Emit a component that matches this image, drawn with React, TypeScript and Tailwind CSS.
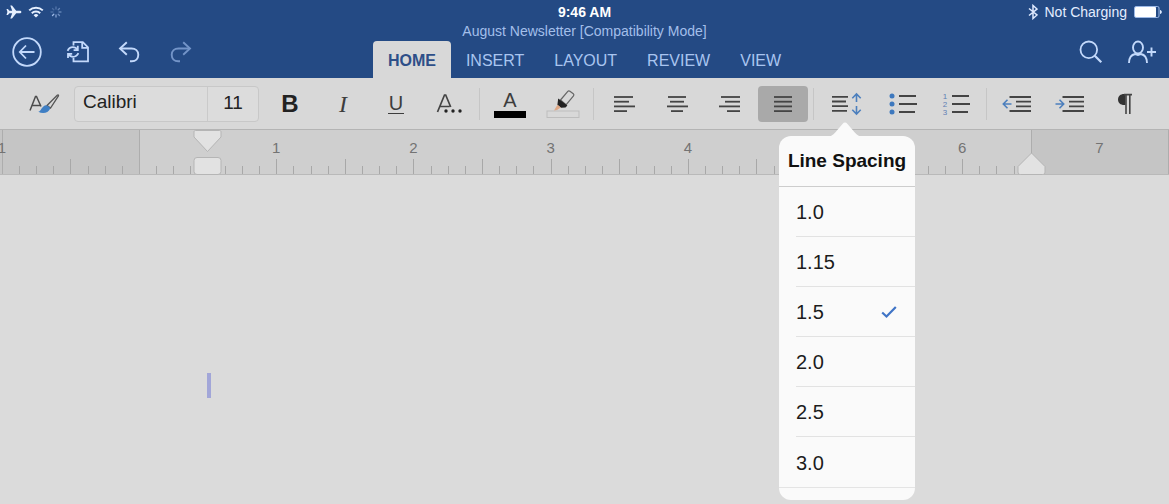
import React, { useState } from "react";

type IconProps = { className?: string };

const Plane = () => (
  <svg width="16" height="14" viewBox="0 0 16 14" fill="#e6f0ff" aria-hidden="true">
    <path d="M15.4 7c0-.8-.8-1.300-1.800-1.300H10.200L6 .6H4.300l1.900 5.100H3.400L1.900 3.900H.5L1.400 7l-.9 3.100h1.400l1.500-1.800h2.800l-1.900 5.100H6l4.200-5.100h3.400c1 0 1.800-.5 1.800-1.300z" />
  </svg>
);

const Wifi = () => (
  <svg width="16" height="12" viewBox="0 0 16 12" fill="none" stroke="#e6f0ff" strokeWidth="2" aria-hidden="true">
    <path d="M1.2 4.4a9.8 9.8 0 0 1 13.6 0" />
    <path d="M3.8 7.2a6 6 0 0 1 8.4 0" />
    <path d="M8 11.6L5.6 9.2a3.4 3.4 0 0 1 4.8 0z" fill="#e6f0ff" stroke="none" />
  </svg>
);

const Spinner = () => (
  <svg width="12" height="12" viewBox="0 0 12 12" fill="none" stroke="#9db9e6" strokeWidth="1.3" strokeLinecap="round" aria-hidden="true">
    <path d="M6 1v2" opacity=".4" />
    <path d="M9.5 2.5L8.2 3.8" opacity=".5" />
    <path d="M11 6H9" opacity=".5" />
    <path d="M9.5 9.5L8.2 8.2" opacity=".6" />
    <path d="M6 11V9" opacity=".8" />
    <path d="M2.5 9.5l1.3-1.3" />
    <path d="M1 6h2" opacity=".3" />
    <path d="M2.5 2.5l1.3 1.3" opacity=".3" />
  </svg>
);

const Bluetooth = () => (
  <svg width="10" height="16" viewBox="0 0 10 16" fill="none" stroke="#dfeaff" strokeWidth="1.5" aria-hidden="true">
    <path d="M1 4.500l8 6.500-4 3.500V1.500L9 5l-8 6.500" />
  </svg>
);

const Battery = () => (
  <svg width="28" height="12" viewBox="0 0 28 12" aria-hidden="true">
    <rect x=".5" y=".5" width="24.5" height="11" rx="1.5" fill="none" stroke="#9db9e6" />
    <rect x="1" y="1" width="21" height="10" rx=".8" fill="#fff" />
    <path d="M26 4c1.2.2 1.8 1 1.8 2S27.200 7.800 26 8z" fill="#dfeaff" />
  </svg>
);

const Back = () => (
  <svg width="30" height="30" viewBox="0 0 30 30" fill="none" stroke="#c3d9fb" strokeWidth="1.800" aria-hidden="true">
    <circle cx="15" cy="15" r="13.8" />
    <path d="M22.500 15H8.500M14 8.500L7.800 15l6.200 6.500" />
  </svg>
);

const SyncFile = () => (
  <svg width="24" height="22" viewBox="0 0 24 22" fill="none" stroke="#c3d9fb" strokeWidth="1.800" aria-hidden="true">
    <path d="M7.500 4.500V1.200h9.300l5.200 5.200v13.900H7.500V17" />
    <path d="M16.200 1.200v5.600H22" />
    <path d="M1.600 9.800C2.600 7.600 4.500 6.200 6.800 6.200c2.100 0 3.600.9 4.600 2.600M11.800 4.800v4.300H7.600" />
    <path d="M12.400 12.200c-1 2.200-2.900 3.600-5.200 3.600-2.100 0-3.600-.9-4.600-2.600M2 17v-4.100h4.200" />
  </svg>
);

const Undo = ({ className }: IconProps) => (
  <svg className={className} width="22" height="22" viewBox="0 0 22 22" fill="none" stroke="currentColor" strokeWidth="1.900" aria-hidden="true">
    <path d="M8.800 1.200L2 7.500l6.800 6.300" />
    <path d="M2 7.500h11.500c4 0 6.800 2.500 6.800 6.300s-2.700 6.500-6.500 6.500H12" />
  </svg>
);

const Search = () => (
  <svg width="24" height="24" viewBox="0 0 24 24" fill="none" stroke="#c3d9fb" strokeWidth="1.800" aria-hidden="true">
    <circle cx="9.800" cy="9.800" r="8.300" />
    <path d="M15.800 15.800l6.500 6.500" strokeWidth="2.200" />
  </svg>
);

const AddUser = () => (
  <svg width="30" height="24" viewBox="0 0 30 24" fill="none" stroke="#c3d9fb" strokeWidth="1.900" aria-hidden="true">
    <ellipse cx="11" cy="7.500" rx="5" ry="6" />
    <path d="M2 23c0-5.500 2-8.200 6.200-9 1.800 1.200 3.800 1.200 5.600 0 4.200.8 6.200 3.500 6.200 9" />
    <path d="M24.500 7.500v9M20 12h9" />
  </svg>
);

const Brush = () => (
  <svg width="31" height="22" viewBox="0 0 31 22" fill="none" aria-hidden="true">
    <path d="M1 17.500L6.500 3.500h1l4.500 10M3 12.500h8" stroke="#4c4c4c" strokeWidth="1.500" />
    <path d="M18 12.500L28.200 2.200c1-.8 1.700 0 1.100 1L21.500 15z" stroke="#555" strokeWidth="1.300" />
    <path d="M9.300 18.800c2.700-.4 3.200-5.400 7.400-6.600 2.600.2 4.400 1.700 4.400 3.600-1.600 4.400-7.600 5.400-11.800 3z" fill="#3f7fc4" />
  </svg>
);

const Highlighter = () => (
  <svg width="34" height="30" viewBox="0 0 34 30" fill="none" aria-hidden="true">
    <rect x="1" y="22" width="32" height="6.500" stroke="#bdbdbd" />
    <path d="M14.500 11l7.300-8.600c.6-.7 1.400-.7 2.100-.2l3.400 2.600c.7.600.8 1.300.2 2L20 15.800z" stroke="#666" strokeWidth="1.200" />
    <path d="M12.200 9.500l9.200 7.100-1.900 1.900-4.500.3-3.600-3z" fill="#222" />
    <path d="M11.500 15.800l3.300 2.800L11 21l-3 .5z" fill="#dfa886" />
  </svg>
);

type Line = [number, number];
const Lines = ({ rows }: { rows: Line[] }) => (
  <svg width="22" height="18" viewBox="0 0 22 18" stroke="#444" strokeWidth="1.800" aria-hidden="true">
    {rows.map(([a, b], i) => (
      <path key={i} d={`M${a} ${2 + i * 4.700}H${b}`} />
    ))}
  </svg>
);

const SpacingIcon = () => (
  <svg width="32" height="24" viewBox="0 0 32 24" fill="none" aria-hidden="true">
    <path d="M1 4.800h16M1 9.500h14M1 14.200h16M1 18.900h15" stroke="#444" strokeWidth="1.800" />
    <path d="M25.500 2v8M21.300 6.200L25.500 2l4.200 4.200M25.500 14v8M21.300 17.800l4.200 4.200 4.200-4.200" stroke="#4c7fbd" strokeWidth="1.600" />
  </svg>
);

const BulletsIcon = () => (
  <svg width="30" height="24" viewBox="0 0 30 24" aria-hidden="true">
    <g fill="#3d78be">
      <circle cx="4" cy="4" r="2.500" />
      <circle cx="4" cy="12" r="2.500" />
      <circle cx="4" cy="20" r="2.500" />
    </g>
    <path d="M11 4h17M11 12h18M11 20h16" stroke="#444" strokeWidth="1.800" />
  </svg>
);

const NumbersIcon = () => (
  <svg width="30" height="24" viewBox="0 0 30 24" aria-hidden="true">
    <g fill="#5f7fb4" fontFamily="Liberation Sans, Arial, sans-serif" fontSize="8" textAnchor="middle">
      <text x="4" y="7">1</text>
      <text x="4" y="15">2</text>
      <text x="4" y="23">3</text>
    </g>
    <path d="M11 4h17M11 12h18M11 20h16" stroke="#444" strokeWidth="1.800" />
  </svg>
);

const IndentIcon = ({ out }: { out?: boolean }) => (
  <svg width="30" height="20" viewBox="0 0 30 20" fill="none" aria-hidden="true">
    <path d="M7.500 3H29M14 7.700h15M14 12.300h15M7.500 17H29" stroke="#444" strokeWidth="1.800" />
    <path d={out ? "M9.500 10H1.500M5.500 5.800L1.300 10l4.200 4.200" : "M.5 10h8M4.500 5.800L8.700 10l-4.200 4.200"} stroke="#4c7fbd" strokeWidth="1.600" />
  </svg>
);

const Tool = ({ label, pressed, wide, children }: { label: string; pressed?: boolean; wide?: boolean; children: React.ReactNode }) => (
  <button
    type="button"
    aria-label={label}
    aria-pressed={pressed}
    className={`flex h-9 shrink-0 items-center justify-center rounded ${wide ? "w-14" : "w-[50px]"} ${pressed ? "bg-[#a9a9a9]" : ""}`}
  >
    {children}
  </button>
);

const Sep = () => <div className="mx-[5px] h-8 w-px shrink-0 bg-[#c6c6c6]" />;
const Group = ({ children }: { children: React.ReactNode }) => <div className="flex shrink-0 gap-[3px]">{children}</div>;

const INCH = 137.2;
const ZERO = 139;

const Ruler = () => {
  const ticks = Array.from({ length: 61 }, (_, i) => i - 8);
  return (
    <svg className="block h-[46px] w-full bg-[#cfcfcf]" aria-label="Ruler">
      <rect x="0" y="0" width={ZERO} height="46" fill="#c5c5c5" />
      <rect x="1031" y="0" width="137" height="46" fill="#c5c5c5" />
      {ticks.map((t) => {
        const x = Math.round(ZERO + (t * INCH) / 8) + 0.5;
        return x > 1170 ? null : <path key={t} d={`M${x} ${t % 4 === 0 ? 30 : 37}V45`} stroke="#a8a8a8" />;
      })}
      <path d="M2.500 0V45M139.500 0V45M1031.500 0V45M1168.500 0V45" stroke="#adadad" />
      <path d="M0 .5H4000" stroke="#b4b4b4" />
      <path d="M0 45.500H4000" stroke="#b9b9b9" />
      <g fill="#737373" fontFamily="Liberation Sans, Arial, sans-serif" fontSize="15" textAnchor="middle">
        {[-1, 1, 2, 3, 4, 6, 7].map((n) => (
          <text key={n} x={ZERO + n * INCH} y="24">
            {Math.abs(n)}
          </text>
        ))}
      </g>
      <g fill="#e2e2e2" stroke="#b5b5b5">
        <path d="M195.500 1.500h24c1 0 1.500.5 1.500 1.500v5L207.500 22.500 194 8V3c0-1 .5-1.500 1.500-1.500z" />
        <rect x="194" y="28.500" width="27" height="17" rx="3" />
        <path d="M1031.500 24L1045 37.500V43c0 1.500-.8 2.500-2.500 2.500h-22c-1.700 0-2.500-1-2.500-2.500v-5.500z" />
      </g>
    </svg>
  );
};

const SpacingMenu = () => {
  const [value, setValue] = useState("1.5");
  return (
    <div role="dialog" aria-label="Line Spacing" className="absolute top-9 left-1/2 z-10 w-[136px] -translate-x-1/2 pt-3.5">
      <svg className="absolute top-0 left-[42px]" width="48" height="15" viewBox="0 0 48 15" fill="#fafafa" aria-hidden="true">
        <path d="M6 15c4-.5 6-2 8-4.200L21.500 2c1.600-1.900 3.400-1.900 5 0L34 10.800c2 2.200 4 3.700 8 4.200z" />
      </svg>
      <div className="rounded-xl bg-[#fafafa] pb-3">
        <h2 className="flex h-[51px] items-center justify-center border-b border-[#cdcdcd] pt-0.5 text-[19px] font-bold whitespace-nowrap text-[#111]">
          Line Spacing
        </h2>
        <ul>
          {["1.0", "1.15", "1.5", "2.0", "2.5", "3.0"].map((v) => (
            <li key={v} className="pl-[17px] last:border-b last:border-[#e4e4e4]">
              <button
                type="button"
                onClick={() => setValue(v)}
                className={`flex h-[50px] w-full items-center justify-between pt-0.5 pr-[18px] text-xl text-[#1c1c1c] ${v === "3.0" ? "" : "border-b border-[#e2e2e2]"}`}
              >
                {v}
                {v === value && (
                  <svg width="16" height="14" viewBox="0 0 16 14" fill="none" stroke="#3f74c6" strokeWidth="2.200" aria-hidden="true">
                    <path d="M1.200 7.500l4.300 4L14.800 2" />
                  </svg>
                )}
              </button>
            </li>
          ))}
        </ul>
      </div>
    </div>
  );
};

export default function App() {
  return (
    <div className="flex min-h-screen flex-col overflow-hidden bg-[#dbdbdb] font-['Liberation_Sans',Arial,sans-serif]">
      <header className="bg-[#244a84]">
        <div className="grid h-6 grid-cols-[1fr_auto_1fr] items-center text-sm text-[#e3edff]">
          <div className="flex items-center gap-1.5 pl-1.5">
            <Plane />
            <Wifi />
            <Spinner />
          </div>
          <time className="font-bold text-white">9:46 AM</time>
          <div className="flex items-center justify-end gap-[7px] pr-[7px]">
            <Bluetooth />
            <span>Not Charging</span>
            <Battery />
          </div>
        </div>
        <div className="grid h-[54px] grid-cols-[1fr_auto_1fr]">
          <div className="flex items-center gap-6 pt-0.5 pl-3">
            <button type="button" aria-label="Back"><Back /></button>
            <button type="button" aria-label="Sync file"><SyncFile /></button>
            <button type="button" aria-label="Undo" className="ml-1 text-[#c3d9fb]"><Undo /></button>
            <button type="button" aria-label="Redo" className="ml-1.5 text-[#7394c8]"><Undo className="-scale-x-100" /></button>
          </div>
          <div className="flex flex-col items-center">
            <h1 className="h-[17px] text-sm leading-[14px] text-[#a3bfea]">August Newsletter [Compatibility Mode]</h1>
            <nav className="flex h-[37px] text-base text-[#a9c5f0]">
              <a href="#home" className="flex items-center rounded-t bg-[#d8d8d8] px-[15px] pt-0.5 font-bold text-[#2e4f88]">HOME</a>
              <a href="#insert" className="flex items-center px-[15px] pt-0.5">INSERT</a>
              <a href="#layout" className="flex items-center px-[15px] pt-0.5">LAYOUT</a>
              <a href="#review" className="flex items-center px-[15px] pt-0.5">REVIEW</a>
              <a href="#view" className="flex items-center px-[15px] pt-0.5">VIEW</a>
            </nav>
          </div>
          <div className="flex items-center justify-end gap-6 pt-0.5 pr-3">
            <button type="button" aria-label="Search"><Search /></button>
            <button type="button" aria-label="Share"><AddUser /></button>
          </div>
        </div>
      </header>

      <div role="toolbar" aria-label="Formatting" className="flex h-[51px] items-center bg-[#d8d8d8] pl-[19px] text-[#3d3d3d]">
        <Tool label="Styles"><Brush /></Tool>
        <div className="mr-1.5 ml-[5px] flex h-9 w-[185px] shrink-0 overflow-hidden rounded border border-[#c8c8c8] bg-[#dcdcdc] text-[#222]">
          <input aria-label="Font" defaultValue="Calibri" className="w-[133px] border-r border-[#cacaca] pb-0.5 pl-2 text-[19px]" />
          <input aria-label="Font size" defaultValue="11" className="w-[50px] text-center text-[19px]" />
        </div>
        <Group>
          <Tool label="Bold"><span className="text-2xl font-bold text-[#222]">B</span></Tool>
          <Tool label="Italic"><span className="font-['Liberation_Serif',serif] text-2xl italic">I</span></Tool>
          <Tool label="Underline"><span className="border-b border-[#3d3d3d] px-px text-xl leading-5">U</span></Tool>
          <Tool label="More formatting">
            <svg width="26" height="22" viewBox="0 0 26 22" fill="none" aria-hidden="true">
              <path d="M1.500 19L8.500 2h1.200l5 12M4 13.500h9.500" stroke="#444" strokeWidth="1.700" />
              <g fill="#222"><circle cx="10" cy="18" r="1.700" /><circle cx="17" cy="18" r="1.700" /><circle cx="24" cy="18" r="1.700" /></g>
            </svg>
          </Tool>
        </Group>
        <Sep />
        <Group>
          <Tool label="Font color">
            <span className="w-8 border-b-[7px] border-black text-center text-xl leading-[22px]">A</span>
          </Tool>
          <Tool label="Highlight"><Highlighter /></Tool>
        </Group>
        <Sep />
        <Group>
          <Tool label="Align left"><Lines rows={[[1, 20], [1, 16], [1, 22], [1, 14]]} /></Tool>
          <Tool label="Align center"><Lines rows={[[2, 20], [4, 18], [1, 22], [5, 17]]} /></Tool>
          <Tool label="Align right"><Lines rows={[[2, 21], [6, 21], [0, 21], [8, 21]]} /></Tool>
          <Tool label="Justify" pressed><Lines rows={[[2, 20], [2, 20], [2, 20], [2, 20]]} /></Tool>
        </Group>
        <Sep />
        <Group>
          <div className="relative">
            <Tool label="Line spacing" wide><SpacingIcon /></Tool>
            <SpacingMenu />
          </div>
          <Tool label="Bullets"><BulletsIcon /></Tool>
          <Tool label="Numbering"><NumbersIcon /></Tool>
        </Group>
        <Sep />
        <Group>
          <Tool label="Decrease indent"><IndentIcon out /></Tool>
          <Tool label="Increase indent"><IndentIcon /></Tool>
          <Tool label="Show marks">
            <svg className="ml-1" width="16" height="22" viewBox="0 0 16 22" aria-hidden="true">
              <path d="M8.500 12H7C3.500 12 1 9.800 1 6.500S3.500 1 7 1h1.500z" fill="#333" />
              <path d="M7 1.600h8M9 1v20M12.800 1v20" stroke="#444" strokeWidth="1.600" />
            </svg>
          </Tool>
        </Group>
      </div>

      <Ruler />
      <main aria-label="Document" className="flex-1 pt-[198px] pl-[207px]">
        <div className="h-[25px] w-1 bg-[#a2a6d8]" />
      </main>
    </div>
  );
}
